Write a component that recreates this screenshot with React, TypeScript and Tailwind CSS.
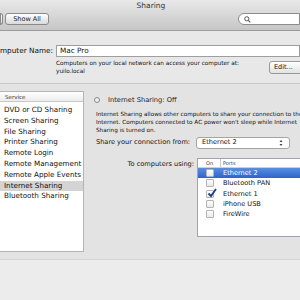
import React from 'react'

const services = [
  'DVD or CD Sharing',
  'Screen Sharing',
  'File Sharing',
  'Printer Sharing',
  'Remote Login',
  'Remote Management',
  'Remote Apple Events',
  'Internet Sharing',
  'Bluetooth Sharing',
]

const ports = [
  { name: 'Ethernet 2', on: false, selected: true },
  { name: 'Bluetooth PAN', on: false, selected: false },
  { name: 'Ethernet 1', on: true, selected: false },
  { name: 'iPhone USB', on: false, selected: false },
  { name: 'FireWire', on: false, selected: false },
]

const Check: React.FC<{ on: boolean }> = ({ on }) => (
  <div className="relative w-[8px] h-[8px] rounded-[1px] border border-[#b4b4b4] bg-gradient-to-b from-white to-[#e8e8e8]">
    {on && (
      <svg className="absolute left-[0px] top-[-3px]" width="10" height="10" viewBox="0 0 10 10">
        <path d="M1.5 5.5 L4 8 L9 1" fill="none" stroke="#1d3f8a" strokeWidth="1.8" />
      </svg>
    )}
  </div>
)

export default function App() {
  return (
    <div className="w-[300px] h-[300px] overflow-hidden bg-[#e8e8e8] flex flex-col text-[#111]" style={{ fontFamily: '"DejaVu Sans", "Liberation Sans", sans-serif' }}>
      {/* Toolbar */}
      <div className="h-[31px] shrink-0 bg-gradient-to-b from-[#e9e9e9] to-[#c6c6c6] border-b border-[#9c9c9c] relative">
        <div className="text-center text-[7.5px] leading-[12px] text-[#333] pl-[2px]">Sharing</div>
        <div className="flex items-center mt-[1px]">
          <div className="w-[3px] h-[12px] border border-[#8a8a8a] rounded-r-[3px] bg-gradient-to-b from-white to-[#dcdcdc]" />
          <div className="ml-[2px] w-[44px] h-[12px] border border-[#8a8a8a] rounded-[3px] bg-gradient-to-b from-white to-[#dadada] text-[6.5px] leading-[10px] text-center text-[#222]">Show All</div>
          <div className="ml-auto w-[62px] h-[12px] border border-[#8c8c8c] rounded-l-full bg-white flex items-center pl-[5px]">
            <svg width="7" height="7" viewBox="0 0 10 10">
              <circle cx="4" cy="4" r="3" fill="none" stroke="#555" strokeWidth="1.4" />
              <path d="M6.2 6.2 L9 9" stroke="#555" strokeWidth="1.6" />
            </svg>
          </div>
        </div>
      </div>

      {/* Computer name */}
      <div className="h-[53px] shrink-0 border-b border-[#c9c9c9] relative">
        <div className="flex items-center mt-[14px]">
          <div className="w-[53px] shrink-0 flex justify-end">
            <span className="text-[7.3px] whitespace-nowrap shrink-0">Computer Name:</span>
          </div>
          <div className="ml-[3px] flex-1 h-[12px] bg-white border border-[#9e9e9e] text-[7.3px] leading-[10px] pl-[3px]">Mac Pro</div>
        </div>
        <div className="flex mt-[2px]">
          <div className="ml-[56px] text-[5.75px] leading-[8px] whitespace-nowrap">
            <div>Computers on your local network can access your computer at:</div>
            <div>yuilo.local</div>
          </div>
          <div className="ml-auto mt-[2px] -mr-[4px] w-[35px] h-[13px] shrink-0 border border-[#9a9a9a] rounded-[3px] bg-gradient-to-b from-white to-[#e2e2e2] text-[6.5px] leading-[11px] pl-[4px]">Edit...</div>
        </div>
      </div>

      {/* Main panel */}
      <div className="h-[176px] shrink-0 bg-[#e3e3e3] border-b border-[#d4d4d4] flex">
        <div className="w-[85px] ml-[-1px] mt-[7px] h-[161px] bg-white border border-[#b4b4b4] shrink-0">
          <div className="h-[10px] border-b border-[#c8c8c8] bg-gradient-to-b from-white to-[#ececec] text-[5.5px] leading-[10px] pl-[5px] text-[#333]">Service</div>
          <div className="mt-[3px]">
            {services.map((s) => (
              <div key={s} className={`h-[10.8px] text-[7.2px] leading-[10.8px] pl-[4px] whitespace-nowrap ${s === 'Internet Sharing' ? 'bg-[#d4d4d4]' : ''}`}>{s}</div>
            ))}
          </div>
        </div>

        <div className="flex-1 pl-[10px] pt-[11px] min-w-0">
          <div className="flex items-center">
            <div className="w-[6px] h-[6px] rounded-full border border-[#8a8a8a] bg-[#efefef]" />
            <div className="ml-[8px] text-[6.7px] leading-[10px] whitespace-nowrap text-[#222]">Internet Sharing: Off</div>
          </div>
          <div className="mt-[5px] ml-[2px] text-[5.7px] leading-[8px] whitespace-nowrap text-[#111]">
            <div>Internet Sharing allows other computers to share your connection to the</div>
            <div>Internet. Computers connected to AC power won't sleep while Internet</div>
            <div>Sharing is turned on.</div>
          </div>
          <div className="flex items-center mt-[3px] ml-[2px]">
            <div className="text-[6.6px] whitespace-nowrap shrink-0">Share your connection from:</div>
            <div className="ml-[6px] w-[94px] h-[12px] shrink-0 bg-white border border-[#a4a4a4] rounded-[3px] flex items-center pl-[5px] text-[6.6px]">
              <span>Ethernet 2</span>
              <svg className="ml-auto mr-[6px]" width="4" height="8" viewBox="0 0 4 8">
                <path d="M0.5 3 L2 1 L3.5 3 Z M0.5 5 L2 7 L3.5 5 Z" fill="#444" />
              </svg>
            </div>
          </div>
          <div className="flex mt-[9px]">
            <div className="w-[100px] shrink-0 text-right text-[6.6px] leading-[10px] mt-[1px] whitespace-nowrap">To computers using:</div>
            <div className="ml-[3px] w-[120px] h-[79px] bg-white border border-[#9ca4b8] shrink-0">
              <div className="h-[9px] flex text-[5px] leading-[9px] text-[#333] border-b border-[#d0d0d0]">
                <div className="w-[23px] pl-[8px] border-r border-[#c8c8c8]">On</div>
                <div className="pl-[2px]">Ports</div>
              </div>
              {ports.map((p) => (
                <div key={p.name} className={`h-[10.3px] flex items-center ${p.selected ? 'bg-gradient-to-b from-[#5a8fe0] to-[#2e63c8] text-white' : ''}`}>
                  <div className="w-[23px] pl-[8px] flex"><Check on={p.on} /></div>
                  <div className="pl-[2px] text-[6.6px] leading-[10px] whitespace-nowrap">{p.name}</div>
                </div>
              ))}
            </div>
          </div>
        </div>
      </div>

      <div className="flex-1 bg-[#ececec]" />
    </div>
  )
}
